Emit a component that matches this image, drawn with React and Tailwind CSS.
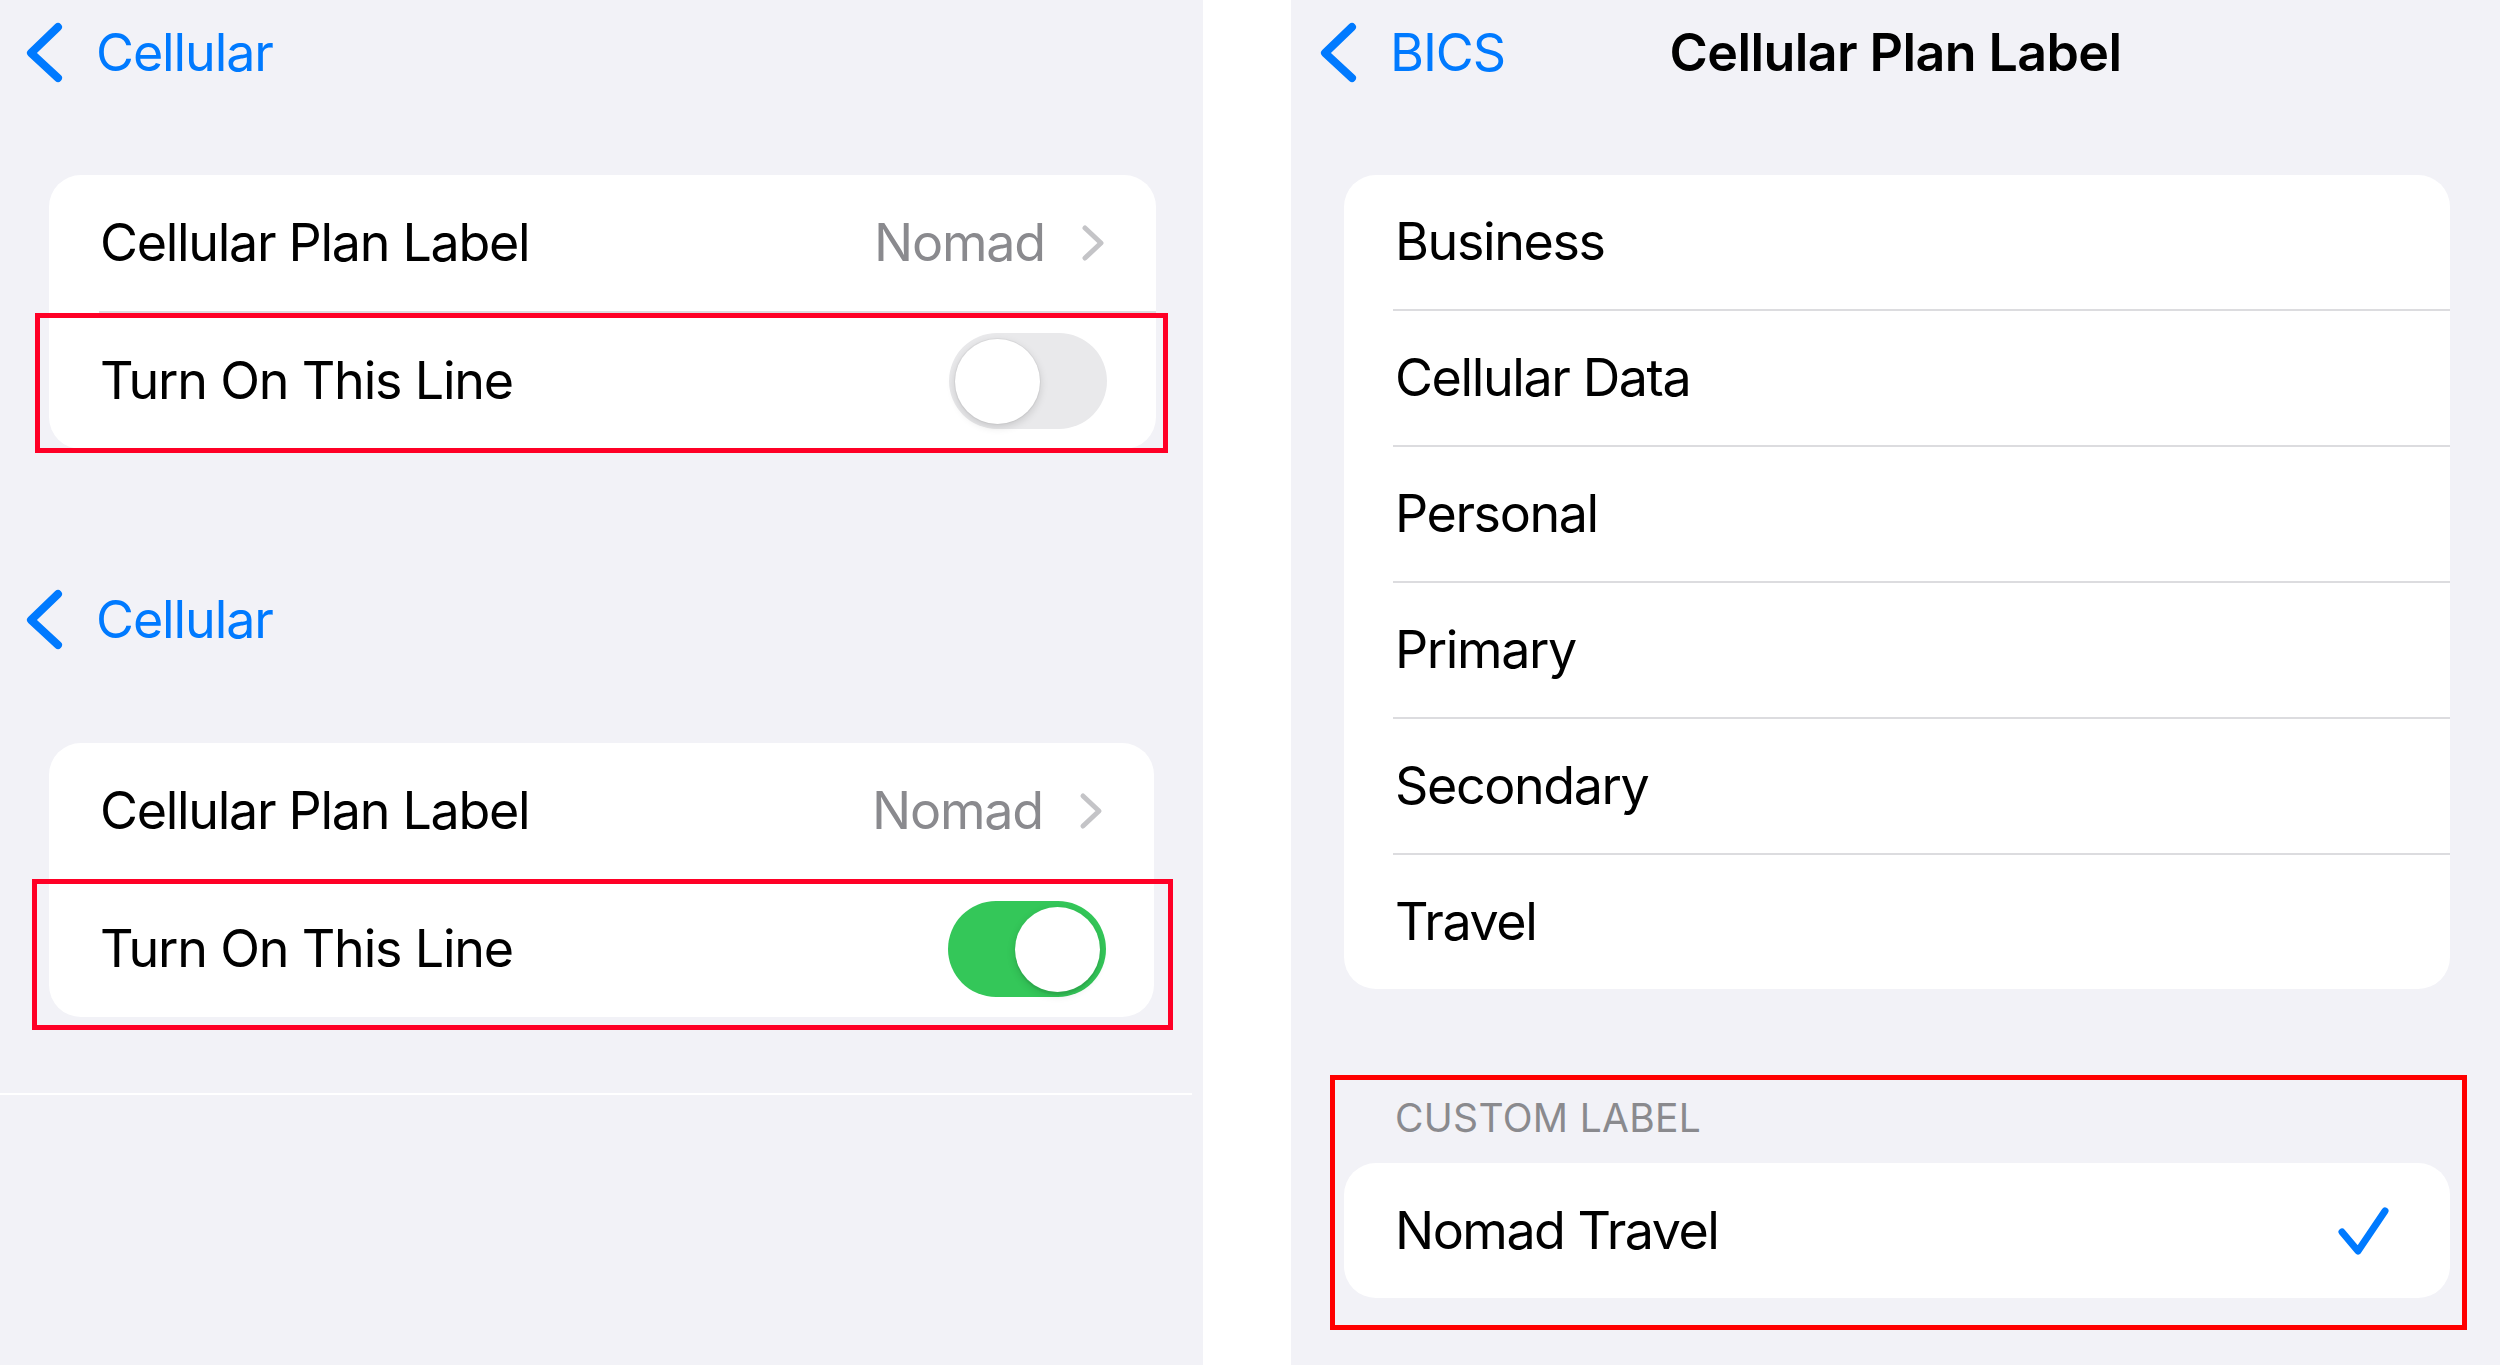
import React from "react";

const BackChevron = () => (
  <svg width="40" height="66" viewBox="0 0 40 66" className="shrink-0">
    <path d="M33 7 L6 33 L33 58" fill="none" stroke="#007aff" strokeWidth="8" strokeLinecap="round" strokeLinejoin="round" />
  </svg>
);

const RowChevron = ({ className = "" }) => (
  <svg width="24" height="40" viewBox="0 0 24 40" className={"shrink-0 " + className}>
    <path d="M4 5 L20 20 L4 35" fill="none" stroke="#c4c4c7" strokeWidth="5" strokeLinecap="round" strokeLinejoin="round" />
  </svg>
);

const Check = () => (
  <svg width="56" height="56" viewBox="0 0 56 56" className="shrink-0">
    <path d="M7 29 L23 48 L50 8" fill="none" stroke="#007aff" strokeWidth="7" strokeLinecap="round" strokeLinejoin="round" />
  </svg>
);

const Toggle = ({ on }) =>
  on ? (
    <div className="flex h-[96px] w-[158px] shrink-0 items-center justify-end rounded-full bg-[#34c759] px-[6px]">
      <div className="h-[85px] w-[85px] rounded-full bg-white shadow-[0_3px_8px_rgba(0,0,0,0.15),0_3px_1px_rgba(0,0,0,0.06)]" />
    </div>
  ) : (
    <div className="flex h-[96px] w-[158px] shrink-0 items-center justify-start rounded-full bg-[#e9e9eb] px-[6px]">
      <div className="h-[85px] w-[85px] rounded-full bg-white shadow-[0_3px_8px_rgba(0,0,0,0.15),0_0_0_1px_rgba(0,0,0,0.04)]" />
    </div>
  );

const Back = ({ label, pl }) => (
  <div className={"flex h-[106px] items-center " + pl}>
    <BackChevron />
    <span className="ml-[31px] text-[52px] leading-none tracking-[-1.1px] text-[#007aff]">{label}</span>
  </div>
);

const Sep = ({ ml }) => <div className={"h-[2px] bg-[#dcdcdf] " + ml} />;

const LineCard = ({ on, toggleClass, redClass }) => (
  <div className="rounded-[32px] bg-white">
    <div className="flex h-[136px] items-center pl-[51px] pr-[51px]">
      <span className="flex-1 text-[52px] leading-none tracking-[-1.3px] text-black">Cellular Plan Label</span>
      <span className="text-[52px] leading-none tracking-[-1.2px] text-[#8a8a8e]">Nomad</span>
      <RowChevron className="ml-[36px]" />
    </div>
    <Sep ml="ml-[50px]" />
    <div className={"relative flex h-[136px] items-center justify-between pl-[51px] " + toggleClass}>
      <span className="text-[52px] leading-none tracking-[-1.2px] text-black">Turn On This Line</span>
      <Toggle on={on} />
      <div className={"pointer-events-none absolute border-[5px] " + redClass} />
    </div>
  </div>
);

const options = ["Business", "Cellular Data", "Personal", "Primary", "Secondary", "Travel"];

export default function App() {
  return (
    <div
      className="flex h-[1365px] w-[2500px] overflow-hidden bg-white"
      style={{ fontFamily: "Inter, 'Noto Sans', sans-serif" }}
    >
      {/* Left panel */}
      <div className="flex w-[1203px] shrink-0 flex-col bg-[#f2f2f7]">
        <Back label="Cellular" pl="pl-[25px]" />
        <div className="mt-[69px] ml-[49px] w-[1107px]">
          <LineCard
            on={false}
            toggleClass="pr-[49px]"
            redClass="-left-[14px] -right-[12px] top-0 -bottom-[4px] border-[#ff0026]"
          />
        </div>
        <div className="mt-[118px]">
          <Back label="Cellular" pl="pl-[25px]" />
        </div>
        <div className="mt-[70px] ml-[49px] w-[1105px]">
          <LineCard
            on={true}
            toggleClass="pr-[48px]"
            redClass="-left-[17px] -right-[19px] -top-[2px] -bottom-[13px] border-[#ff0026]"
          />
        </div>
        <div className="mt-[76px] h-[2px] w-[1192px] bg-white" />
      </div>

      {/* Gap */}
      <div className="w-[88px] shrink-0 bg-white" />

      {/* Right panel */}
      <div className="flex w-[1209px] shrink-0 flex-col bg-[#f2f2f7]">
        <div className="grid h-[106px] grid-cols-[1fr_auto_1fr] items-center">
          <div className="flex items-center pl-[28px]">
            <BackChevron />
            <span className="ml-[31px] text-[52px] leading-none tracking-[-1.1px] text-[#007aff]">BICS</span>
          </div>
          <div className="text-[52px] font-semibold leading-none tracking-[-0.6px] text-black">Cellular Plan Label</div>
          <div />
        </div>

        <div className="mt-[69px] ml-[53px] w-[1106px] rounded-[32px] bg-white">
          {options.map((o, i) => (
            <React.Fragment key={o}>
              {i > 0 && <Sep ml="ml-[49px]" />}
              <div className="flex h-[134px] items-center pl-[51px]">
                <span className="text-[52px] leading-none tracking-[-1.4px] text-black">{o}</span>
              </div>
            </React.Fragment>
          ))}
        </div>

        <div className="relative mt-[98px] ml-[53px] w-[1106px]">
          <div className="flex h-[60px] items-center pl-[51px] text-[39px] leading-none tracking-[0.3px] text-[#8a8a8e]">
            CUSTOM LABEL
          </div>
          <div className="mt-[16px] flex h-[135px] items-center justify-between rounded-[32px] bg-white pl-[51px] pr-[59px]">
            <span className="text-[52px] leading-none tracking-[-1.5px] text-black">Nomad Travel</span>
            <Check />
          </div>
          <div className="pointer-events-none absolute -left-[14px] -right-[17px] -top-[12px] -bottom-[32px] border-[5px] border-[#ff0000]" />
        </div>
      </div>
    </div>
  );
}
